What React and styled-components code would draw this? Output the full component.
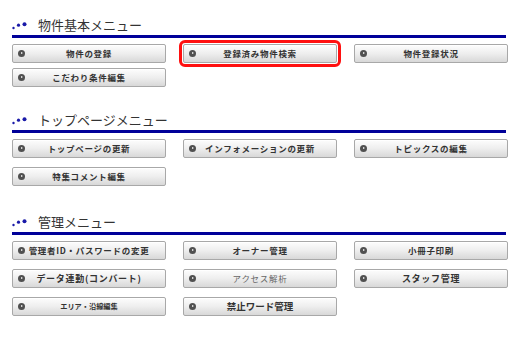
import React from 'react'
import styled, { createGlobalStyle } from 'styled-components'

const GlobalStyle = createGlobalStyle`
  body {
    margin: 0;
    background: #fff;
    font-family: "Noto Sans CJK JP", "Noto Sans", sans-serif;
  }
`

const Page = styled.div`
  width: 496px;
  padding: 17px 0 0 12px;
`

const Section = styled.section`
  margin-top: ${p => p.$top || 0}px;
`

const Heading = styled.div`
  display: flex;
  align-items: center;
  height: 18px;
  border-bottom: 3px solid #000099;
  margin-right: 2px;
`

const HeadingText = styled.h2`
  margin: 0 0 0 10px;
  font-size: 13px;
  font-weight: normal;
  color: #333;
  line-height: 18px;
  position: relative;
  top: -1px;
`

const Grid = styled.div`
  display: grid;
  grid-template-columns: repeat(3, 154px);
  column-gap: 17px;
  row-gap: ${p => p.$gap}px;
  margin-top: 6px;
`

const Button = styled.a`
  position: relative;
  display: flex;
  align-items: center;
  justify-content: center;
  height: 17px;
  border: 1px solid #a8a8a8;
  border-radius: 2px;
  background: linear-gradient(#fdfdfd, #eeeeee 50%, #d8d8d8);
  box-shadow: inset 0 1px 0 #fff;
  text-decoration: none;
  cursor: pointer;
  outline: ${p => (p.$active ? '3px solid #ff1010' : 'none')};
  outline-offset: 1px;
`

const Arrow = styled.span`
  position: absolute;
  left: 5px;
  top: 50%;
  width: 7px;
  height: 7px;
  margin-top: -3.5px;
  border-radius: 50%;
  background: #505050;
  &::after {
    content: '';
    position: absolute;
    left: 3px;
    top: 2px;
    border-left: 2px solid #fff;
    border-top: 1.5px solid transparent;
    border-bottom: 1.5px solid transparent;
  }
`

const Label = styled.span`
  font-size: ${p => p.$size || 8.5}px;
  font-weight: ${p => (p.$light ? 'normal' : 'bold')};
  letter-spacing: ${p => (p.$tight ? 0 : 0.7)}px;
  color: ${p => (p.$muted ? '#666' : '#333')};
  white-space: nowrap;
  line-height: 1;
`

function Dots () {
  return (
    <svg width='16' height='8' viewBox='0 0 16 8'>
      <circle cx='1.5' cy='6' r='1.2' fill='#1a1aa8' />
      <circle cx='6.5' cy='3.2' r='1.6' fill='#1a1aa8' />
      <circle cx='12.5' cy='2.2' r='2' fill='#1a1aa8' />
    </svg>
  )
}

function MenuButton ({ label, active, ...rest }) {
  return (
    <Button $active={active}>
      <Arrow />
      <Label {...rest}>{label}</Label>
    </Button>
  )
}

const sections = [
  {
    title: '物件基本メニュー',
    top: 0,
    gap: 5,
    items: [
      { label: '物件の登録' },
      { label: '登録済み物件検索', active: true },
      { label: '物件登録状況' },
      { label: 'こだわり条件編集' }
    ]
  },
  {
    title: 'トップページメニュー',
    top: 25,
    gap: 9,
    items: [
      { label: 'トップページの更新' },
      { label: 'インフォメーションの更新' },
      { label: 'トピックスの編集' },
      { label: '特集コメント編集' }
    ]
  },
  {
    title: '管理メニュー',
    top: 28,
    gap: 9,
    items: [
      { label: '管理者ID・パスワードの変更' },
      { label: 'オーナー管理' },
      { label: '小冊子印刷' },
      { label: 'データ連動(コンバート)', $size: 9 },
      { label: 'アクセス解析', $light: true, $muted: true },
      { label: 'スタッフ管理', $size: 9 },
      { label: 'エリア・沿線編集', $size: 7.2, $tight: true },
      { label: '禁止ワード管理', $size: 9.5, $tight: true }
    ]
  }
]

export default function App () {
  return (
    <Page>
      <GlobalStyle />
      {sections.map(s => (
        <Section key={s.title} $top={s.top}>
          <Heading>
            <Dots />
            <HeadingText>{s.title}</HeadingText>
          </Heading>
          <Grid $gap={s.gap}>
            {s.items.map(({ label, active, ...rest }) => (
              <MenuButton key={label} label={label} active={active} {...rest} />
            ))}
          </Grid>
        </Section>
      ))}
    </Page>
  )
}
